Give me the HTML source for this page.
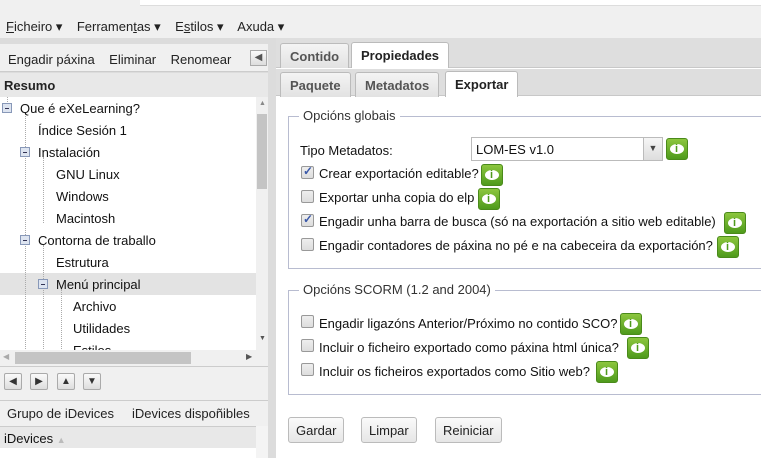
<!DOCTYPE html>
<html><head><meta charset="utf-8"><style>
*{margin:0;padding:0;box-sizing:border-box}
body{width:761px;height:458px;overflow:hidden;background:#fff;font-family:"Liberation Sans",sans-serif;font-size:13px;color:#111;position:relative}
.a{position:absolute;white-space:nowrap}
.cb{position:absolute;width:13px;height:13px;border:1px solid #999;border-radius:2px;background:linear-gradient(#eee,#ddd)}
.cb.on::after{content:"✓";position:absolute;left:1px;top:-3px;font-size:12px;color:#3a58a8;font-weight:bold}
.info{position:absolute;width:22px;height:22px;border-radius:3px;background:linear-gradient(#8cc63e,#4e9a1c);border:1px solid #4a8a1a}
.info::before{content:"";position:absolute;left:3px;top:5px;width:14px;height:10px;border-radius:50%;background:#fff}
.info::after{content:"i";position:absolute;left:8px;top:3px;font:bold 11px/14px "Liberation Sans";color:#4e9a1c}
.tab{position:absolute;height:25px;border:1px solid #bbb;border-bottom:none;border-radius:3px 3px 0 0;background:linear-gradient(#f4f4f4,#e2e2e2);font-weight:bold;color:#555;padding:5px 9px 0}
.tab.sel{background:#fff;color:#222;height:26px}
.btn{position:absolute;height:26px;border:1px solid #bbb;border-radius:3px;background:linear-gradient(#fafafa,#e6e6e6);padding:5px 7px 0;color:#222}
.fs{position:absolute;border:1px solid #b8bcd0}
.lg{position:absolute;background:#fff;padding:0 4px;color:#333}
.tl{position:absolute;border-left:1px dotted #aaa}
.ex{position:absolute;width:10px;height:10px;border:1px solid #8898b8;background:#dde4f0}
.ex::after{content:"";position:absolute;left:2px;top:4px;width:4px;height:1px;background:#335}
.ab{position:absolute;top:373px;width:18px;height:17px;border:1px solid #aaa;border-radius:2px;background:linear-gradient(#fafafa,#ddd);font-size:10px;text-align:center;line-height:15px;color:#333}
</style></head><body>
<div class="a" style="left:0;top:0;width:761px;height:38px;background:#f0f0f0"></div>
<div class="a" style="left:140px;top:0;width:621px;height:6px;background:#fff;border-bottom:1px solid #ddd"></div>
<div class="a" style="left:6px;top:19px;color:#222"><u>F</u>icheiro ▾ &nbsp;&nbsp; Ferramen<u>t</u>as ▾ &nbsp;&nbsp; E<u>s</u>tilos ▾ &nbsp;&nbsp; Axuda ▾</div>
<div class="a" style="left:0;top:38px;width:761px;height:420px;background:#dcdcdc"></div>
<!-- left -->
<div class="a" style="left:0;top:44px;width:268px;height:28px;background:#f0f0f0;border-bottom:1px solid #ccc"></div>
<div class="a" style="left:8px;top:52px;color:#222">Engadir páxina &nbsp;&nbsp; Eliminar &nbsp;&nbsp; Renomear</div>
<div class="a" style="left:250px;top:50px;width:17px;height:16px;border:1px solid #aaa;background:linear-gradient(#fafafa,#ddd);font-size:10px;text-align:center;line-height:14px;color:#555">◀</div>
<div class="a" style="left:0;top:73px;width:268px;height:24px;background:#e8e8e8;font-weight:bold;padding:5px 4px;color:#222">Resumo</div>
<div class="a" style="left:0;top:97px;width:268px;height:253px;background:#fff;overflow:hidden">
<div class="a" style="left:0;top:176px;width:256px;height:22px;background:#e3e3e3"></div>
<div class="tl" style="left:7px;top:0;height:5px"></div>
<div class="tl" style="left:25px;top:16px;height:240px"></div>
<div class="tl" style="left:43px;top:60px;height:66px"></div>
<div class="tl" style="left:43px;top:148px;height:110px"></div>
<div class="tl" style="left:61px;top:192px;height:70px"></div>
<div class="ex" style="left:2px;top:6px"></div><div class="a" style="left:20px;top:4px">Que é eXeLearning?</div>
<div class="a" style="left:38px;top:26px">Índice Sesión 1</div>
<div class="ex" style="left:20px;top:50px"></div><div class="a" style="left:38px;top:48px">Instalación</div>
<div class="a" style="left:56px;top:70px">GNU Linux</div>
<div class="a" style="left:56px;top:92px">Windows</div>
<div class="a" style="left:56px;top:114px">Macintosh</div>
<div class="ex" style="left:20px;top:138px"></div><div class="a" style="left:38px;top:136px">Contorna de traballo</div>
<div class="a" style="left:56px;top:158px">Estrutura</div>
<div class="ex" style="left:38px;top:182px"></div><div class="a" style="left:56px;top:180px">Menú principal</div>
<div class="a" style="left:73px;top:202px">Archivo</div>
<div class="a" style="left:73px;top:224px">Utilidades</div>
<div class="a" style="left:73px;top:246px">Estilos</div>
<div class="a" style="left:256px;top:0;width:12px;height:253px;background:#f0f0f0"></div>
<div class="a" style="left:257px;top:17px;width:10px;height:75px;background:#c4c4c4"></div>
<div class="a" style="left:259px;top:3px;font-size:7px;color:#888">▲</div>
<div class="a" style="left:259px;top:238px;font-size:7px;color:#555">▼</div>
</div>
<div class="a" style="left:0;top:350px;width:268px;height:16px;background:#f0f0f0"></div>
<div class="a" style="left:15px;top:352px;width:176px;height:12px;background:#c4c4c4"></div>
<div class="a" style="left:3px;top:352px;font-size:8px;color:#aaa">◀</div>
<div class="a" style="left:246px;top:352px;font-size:8px;color:#555">▶</div>
<div class="a" style="left:0;top:366px;width:268px;height:34px;background:#f0f0f0;border-top:1px solid #ccc"></div>
<div class="ab" style="left:4px">◀</div><div class="ab" style="left:30px">▶</div><div class="ab" style="left:57px">▲</div><div class="ab" style="left:83px">▼</div>
<div class="a" style="left:0;top:400px;width:268px;height:58px;background:#f0f0f0;border-top:1px solid #ccc"></div>
<div class="a" style="left:7px;top:406px;color:#222">Grupo de iDevices &nbsp;&nbsp;&nbsp; iDevices dispoñibles</div>
<div class="a" style="left:0;top:426px;width:256px;height:22px;background:#e8e8e8;border-top:1px solid #ccc;padding:4px 4px">iDevices <span style="color:#bbb;font-size:9px">▲</span></div>
<div class="a" style="left:256px;top:426px;width:12px;height:32px;background:#f4f4f4"></div>
<div class="a" style="left:0;top:448px;width:256px;height:10px;background:#fff"></div>
<!-- right -->
<div class="a" style="left:276px;top:38px;width:485px;height:420px;background:#fff"></div>
<div class="a" style="left:276px;top:38px;width:485px;height:30px;background:#dedede;border-bottom:1px solid #c8c8c8"></div>
<div class="tab" style="left:280px;top:43px">Contido</div>
<div class="tab sel" style="left:351px;top:42px">Propiedades</div>
<div class="a" style="left:276px;top:69px;width:485px;height:27px;background:#dedede;border-bottom:1px solid #c8c8c8"></div>
<div class="tab" style="left:280px;top:72px">Paquete</div>
<div class="tab" style="left:355px;top:72px">Metadatos</div>
<div class="tab sel" style="left:445px;top:71px">Exportar</div>
<div class="fs" style="left:288px;top:116px;width:480px;height:153px"></div>
<div class="lg" style="left:299px;top:108px">Opcións globais</div>
<div class="a" style="left:300px;top:143px">Tipo Metadatos:</div>
<div class="a" style="left:471px;top:137px;width:192px;height:24px;border:1px solid #bbb;background:#fff;padding:4px 4px">LOM-ES v1.0</div>
<div class="a" style="left:643px;top:137px;width:20px;height:24px;border:1px solid #bbb;background:linear-gradient(#f6f6f6,#ddd);font-size:9px;text-align:center;line-height:20px;color:#444">▼</div>
<div class="info" style="left:666px;top:138px"></div>
<div class="cb on" style="left:301px;top:166px"></div><div class="a" style="left:319px;top:166px">Crear exportación editable?</div><div class="info" style="left:481px;top:164px"></div>
<div class="cb" style="left:301px;top:190px"></div><div class="a" style="left:319px;top:190px">Exportar unha copia do elp</div><div class="info" style="left:478px;top:188px"></div>
<div class="cb on" style="left:301px;top:214px"></div><div class="a" style="left:319px;top:214px">Engadir unha barra de busca (só na exportación a sitio web editable)</div><div class="info" style="left:724px;top:212px"></div>
<div class="cb" style="left:301px;top:238px"></div><div class="a" style="left:319px;top:238px">Engadir contadores de páxina no pé e na cabeceira da exportación?</div><div class="info" style="left:717px;top:236px"></div>
<div class="fs" style="left:288px;top:290px;width:480px;height:105px"></div>
<div class="lg" style="left:299px;top:282px">Opcións SCORM (1.2 and 2004)</div>
<div class="cb" style="left:301px;top:315px"></div><div class="a" style="left:319px;top:316px">Engadir ligazóns Anterior/Próximo no contido SCO?</div><div class="info" style="left:620px;top:313px"></div>
<div class="cb" style="left:301px;top:339px"></div><div class="a" style="left:319px;top:340px">Incluir o ficheiro exportado como páxina html única?</div><div class="info" style="left:627px;top:337px"></div>
<div class="cb" style="left:301px;top:363px"></div><div class="a" style="left:319px;top:364px">Incluir os ficheiros exportados como Sitio web?</div><div class="info" style="left:596px;top:361px"></div>
<div class="btn" style="left:288px;top:417px">Gardar</div>
<div class="btn" style="left:361px;top:417px">Limpar</div>
<div class="btn" style="left:435px;top:417px">Reiniciar</div>
</body></html>
